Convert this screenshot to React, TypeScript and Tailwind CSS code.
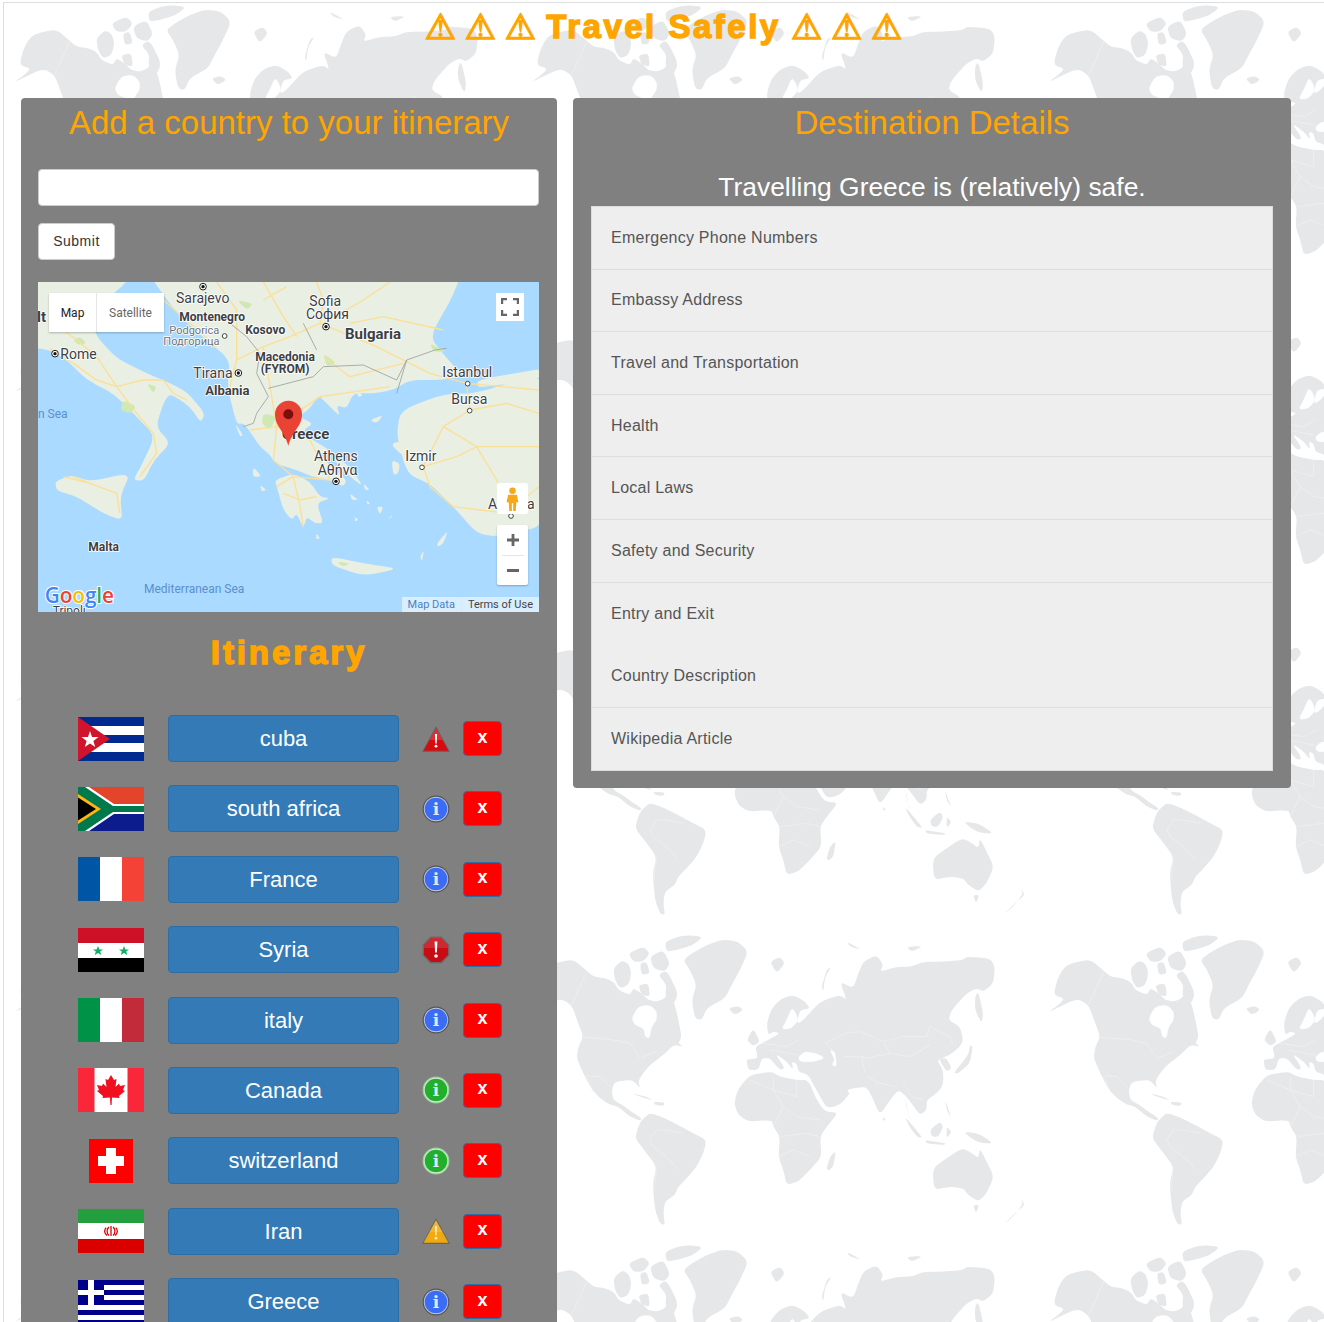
const sans = "font-['Liberation_Sans',Arial,sans-serif]";

const detailItems = [
  { label: "Emergency Phone Numbers", line: true },
  { label: "Embassy Address", line: true },
  { label: "Travel and Transportation", line: true },
  { label: "Health", line: true },
  { label: "Local Laws", line: true },
  { label: "Safety and Security", line: true },
  { label: "Entry and Exit", line: false },
  { label: "Country Description", line: true },
  { label: "Wikipedia Article", line: false },
];

const trips = [
  { name: "cuba", flag: "cuba", level: "danger" },
  { name: "south africa", flag: "southAfrica", level: "info" },
  { name: "France", flag: "france", level: "info" },
  { name: "Syria", flag: "syria", level: "stop" },
  { name: "italy", flag: "italy", level: "info" },
  { name: "Canada", flag: "canada", level: "safe" },
  { name: "switzerland", flag: "swiss", level: "safe" },
  { name: "Iran", flag: "iran", level: "warn" },
  { name: "Greece", flag: "greece", level: "info" },
];

// rounds the corners of an "M x,y L x,y ... Z" outline so coasts don't look cut with scissors
function roundCoast(d: string) {
  const lerp = (a: number[], b: number[], t: number) => [a[0] + (b[0] - a[0]) * t, a[1] + (b[1] - a[1]) * t];
  return d
    .split("M")
    .filter((sub) => sub.trim())
    .map((sub) => {
      const pts = sub.replace("Z", "").split("L").map((p) => p.trim().split(",").map(Number));
      return (
        pts
          .map((v, i) => {
            const from = lerp(v, pts[(i + pts.length - 1) % pts.length], 0.35);
            const to = lerp(v, pts[(i + 1) % pts.length], 0.35);
            return `${i === 0 ? "M" : "L"}${from} Q${v} ${to}`;
          })
          .join(" ") + " Z"
      );
    })
    .join(" ");
}

function Coast({ d, fill }: { d: string; fill?: string }) {
  return <path d={roundCoast(d)} fill={fill} stroke={fill} />;
}

const borderStroke = "#f1f2f3";

function Americas() {
  return (
    <>
      <Coast d="M-60,249 L-22,222 L-8,205 L-40,195 L-30,150 L-8,110 L20,98 L70,88 L110,122 L130,140 L170,145 L195,160 L205,180 L240,195 L250,175 L275,190 L295,210 L320,215 L345,205 L355,185 L375,225 L385,270 L395,320 L385,340 L400,350 L370,345 L345,370 L320,390 L295,410 L265,450 L270,475 L258,460 L245,450 L195,455 L185,480 L190,510 L225,530 L245,545 L275,565 L270,572 L240,560 L205,530 L175,522 L145,500 L120,470 L100,430 L80,385 L85,350 L100,320 L85,280 L65,225 L30,205 Z" />
      <Coast d="M245,265 L265,230 L300,225 L320,245 L320,270 L305,290 L298,325 L285,320 L282,295 L255,285 Z" fill="#fff" />
      <Coast d="M400,90 L425,70 L470,45 L520,28 L565,35 L595,65 L570,120 L545,165 L525,205 L470,235 L455,270 L435,265 L425,210 L440,165 L420,120 Z" />
      <Coast d="M535,235 L565,228 L580,240 L555,255 Z" />
      <Coast d="M190,115 L215,92 L235,100 L245,130 L235,165 L210,175 L195,150 Z M235,70 L280,50 L300,70 L280,95 L250,95 Z M300,80 L340,60 L360,100 L345,125 L310,115 Z M345,35 L400,15 L460,20 L430,45 L380,60 L350,65 Z M325,135 L350,120 L385,190 L370,225 L345,195 L350,165 Z M270,100 L290,95 L300,130 L275,135 Z M265,165 L295,160 L300,200 L275,195 Z" />
      <Coast d="M245,490 L290,500 L310,512 L270,500 Z M310,515 L345,518 L340,528 L315,525 Z" />
      <Coast d="M275,570 L300,548 L345,565 L385,585 L420,605 L470,630 L460,670 L440,710 L410,745 L385,770 L375,795 L345,815 L340,850 L345,885 L330,880 L315,840 L308,760 L320,710 L290,670 L255,625 L265,590 Z" />
      <path d="M100,322 L180,328 L240,340 L270,385 L320,365 M65,225 L110,125 M110,437 L150,440 L180,470 M300,630 L320,600 L350,600 L400,610 M300,630 L310,650 L360,690 L385,720 M320,710 L310,790 M108,438 L132,488" fill="none" stroke={borderStroke} strokeWidth="2" />
    </>
  );
}

function EurasiaAfrica() {
  return (
    <>
      <Coast d="M50,395 L52,388 L85,385 L75,350 L105,335 L150,310 L130,305 L115,315 L110,280 L125,235 L155,205 L190,195 L225,215 L240,235 L210,240 L200,280 L215,275 L270,215 L330,195 L350,210 L330,155 L370,175 L385,130 L400,95 L440,75 L460,105 L450,125 L500,110 L545,110 L580,95 L640,95 L700,90 L710,80 L780,85 L795,110 L790,160 L760,185 L740,175 L710,190 L665,240 L655,270 L690,290 L700,330 L690,350 L660,375 L620,390 L640,420 L640,465 L620,490 L590,510 L590,540 L570,555 L545,520 L525,495 L505,480 L480,510 L450,555 L430,510 L410,470 L370,475 L350,480 L360,490 L330,525 L290,535 L265,490 L245,455 L235,435 L205,425 L200,400 L185,395 L190,420 L170,395 L135,370 L165,415 L150,420 L120,385 L95,385 L85,420 L55,420 Z" />
      <Coast d="M205,380 L225,365 L260,370 L285,385 L250,395 L210,395 Z M300,360 L315,365 L320,410 L305,405 L315,390 Z M185,235 L170,270 L155,298 L185,295 L205,270 L195,245 Z" fill="#fff" />
      <Coast d="M12,520 L25,475 L60,435 L125,425 L150,440 L200,450 L235,450 L260,510 L285,545 L325,548 L290,590 L270,620 L275,680 L240,720 L205,755 L170,765 L160,720 L145,680 L150,620 L130,590 L125,570 L55,575 L25,555 Z" />
      <Coast d="M290,715 L300,680 L318,662 L310,710 L295,722 Z M50,330 L70,295 L90,335 L70,348 Z M120,95 L150,80 L165,100 L140,130 Z M275,170 L290,120 L305,110 L285,140 L280,185 Z M350,35 L395,60 L360,50 Z M530,50 L580,48 L545,65 Z M5,240 L30,232 L32,245 L10,252 Z" />
      <Coast d="M670,430 L715,375 L720,345 L728,350 L720,400 L685,430 Z M735,200 L745,185 L760,250 L755,280 L735,240 Z M625,385 L650,385 L665,415 L650,425 Z M525,500 L530,540 L545,575 L535,555 Z" />
      <Coast d="M525,560 L580,625 L560,620 L535,585 Z M585,630 L650,640 L640,645 L590,640 Z M600,600 L630,575 L640,590 L625,620 L605,620 Z M650,590 L665,605 L650,625 Z M700,605 L745,610 L790,640 L760,640 L730,630 Z M645,510 L665,565 L650,540 Z M460,560 L468,570 L460,572 Z" />
      <Coast d="M608,715 L650,685 L695,655 L720,665 L745,685 L750,655 L770,695 L792,740 L770,790 L745,815 L715,795 L700,775 L660,770 L612,780 Z M730,825 L748,825 L738,850 Z M820,885 L860,845 L885,825 L870,800 L880,820 L850,860 Z" />
      <path d="M285,340 L345,310 L390,305 L460,335 L520,320 L590,320 L600,290 L660,320 L670,345 M460,335 L480,370 L540,380 L600,345 M290,340 L310,365 M395,380 L410,385 L480,370 M340,380 L395,380 L405,430 M410,440 L450,460 L500,470 M520,455 L545,500 L580,510 M60,450 L130,480 L200,500 L200,450 M130,440 L130,480 L160,530 L200,560 M160,530 L130,590 M200,560 L270,570 M150,620 L230,610 L270,620 M145,680 L190,660 L240,680 M100,340 L170,350 L205,330 M120,360 L205,375" fill="none" stroke={borderStroke} strokeWidth="2" />
    </>
  );
}

function WorldBackground() {
  return (
    <svg className="absolute inset-0" width="1324" height="1322">
      <defs>
        <pattern id="worldTile" patternUnits="userSpaceOnUse" x="43" y="4" width="517" height="310">
          <g fill="#e6e7e9" transform="translate(-560 -934)">
            <g transform="translate(550 930) scale(0.3333)"><Americas /></g>
            <g transform="translate(1067 930) scale(0.3333)"><Americas /></g>
            <g transform="translate(730 930) scale(0.3333)"><EurasiaAfrica /></g>
          </g>
        </pattern>
      </defs>
      <rect width="1324" height="1322" fill="url(#worldTile)" />
    </svg>
  );
}

function MapLabel({ x, y, size, text, bold, color = "#3c4043" }: { x: number; y: number; size: number; text: string; bold?: boolean; color?: string }) {
  return (
    <text x={x} y={y} fontSize={size} fontWeight={bold ? 700 : 400} fill={color} stroke="#fff" strokeWidth="5" paintOrder="stroke" strokeLinejoin="round" fontFamily="Roboto, sans-serif">
      {text}
    </text>
  );
}

function Dot({ x, y, open }: { x: number; y: number; open?: boolean }) {
  return open ? (
    <circle cx={x} cy={y} r="7" fill="#fff" stroke="#444" strokeWidth="3" />
  ) : (
    <g>
      <circle cx={x} cy={y} r="10" fill="#fff" stroke="#222" strokeWidth="3" />
      <circle cx={x} cy={y} r="5" fill="#111" />
    </g>
  );
}

function GreeceMap() {
  const land = "#e9efe2";
  const road = "#fcdf96";
  return (
    <svg viewBox="24 6 1503 990" width="501" height="330" className="block">
      <rect x="24" y="6" width="1503" height="990" fill="#aadaff" />
      <g fill={land}>
        <Coast d="M24,-40 L320,-40 L290,6 L240,50 L180,110 L200,170 L260,235 L350,280 L400,300 L470,335 L525,400 L512,428 L480,380 L420,340 L400,370 L378,440 L422,490 L372,540 L342,602 L310,600 L332,560 L375,470 L330,420 L250,340 L170,300 L110,240 L60,210 L-20,200 L-20,-40 Z" />
        <Coast d="M75,605 L125,585 L180,605 L302,578 L270,650 L278,722 L220,700 L140,650 L80,632 Z" />
        <Coast d="M340,-40 L1300,-40 L1285,6 L1262,60 L1200,170 L1240,222 L1300,290 L1230,300 L1140,300 L1090,330 L1030,340 L970,340 L950,385 L920,375 L930,410 L890,370 L865,345 L840,385 L805,410 L850,430 L820,450 L840,475 L900,510 L870,525 L910,565 L950,600 L940,620 L900,600 L845,590 L800,570 L735,550 L720,525 L690,500 L660,455 L640,430 L620,432 L592,322 L600,240 L530,180 L440,100 Z" />
        <Coast d="M735,600 L790,580 L840,605 L870,650 L900,655 L860,670 L880,730 L855,730 L830,710 L820,745 L800,700 L785,720 L760,690 L740,620 Z" />
        <Coast d="M910,525 L960,560 L1000,620 L960,590 L920,550 Z" />
        <Coast d="M1110,392 L1240,342 L1340,340 L1560,268 L1560,735 L1400,770 L1340,760 L1270,680 L1200,612 L1132,582 L1100,470 Z" />
        <Coast d="M1340,300 L1560,262 L1560,290 L1345,325 Z" />
        <Coast d="M905,830 L1000,850 L1108,866 L1000,888 L905,856 Z" />
        <Coast d="M1220,792 L1255,750 L1240,790 L1225,800 Z M980,335 L1000,345 L985,352 Z M1020,420 L1060,405 L1040,430 Z M1080,490 L1135,480 L1150,510 L1120,530 Z M1085,540 L1110,550 L1105,580 L1090,585 Z M615,430 L640,465 L630,470 Z M670,560 L695,590 L668,590 Z M690,615 L710,630 L695,635 Z M1040,680 L1060,680 L1050,705 Z M960,640 L985,660 L965,660 Z M1000,610 L1020,630 L1005,630 Z M860,760 L870,775 L858,778 Z M1170,830 L1182,810 L1176,845 Z M1010,660 L1020,670 L1012,675 Z M975,710 L985,720 L975,725 Z M1080,710 L1090,705 L1075,720 Z" />
      </g>
      <g fill="#cfe8b4">
        <Coast d="M280,360 L320,380 L300,400 L270,390 Z M170,190 L150,170 L130,180 L145,195 Z M350,310 L380,320 L370,340 Z M700,400 L740,410 L720,450 L695,430 Z M880,220 L920,250 L890,260 Z M620,60 L670,70 L650,90 Z M1200,190 L1250,215 L1210,215 Z M920,845 L960,850 L940,860 Z" />
      </g>
      <g fill="none" stroke={road} strokeWidth="4" strokeLinejoin="round">
        <path d="M60,205 L130,250 L200,300 L260,320 L340,300 L400,300 L430,340 L470,360 M260,320 L320,400 L370,460 L380,520 L330,590 M60,120 L140,180 L200,230 L260,320" />
        <path d="M100,590 L180,610 L260,640 L270,700 M180,610 L130,590" />
        <path d="M620,240 L700,200 L780,170 L870,130 L880,60 L860,6 M870,130 L1040,200 L1200,280 L1310,310 L1527,330 M700,60 L770,20" />
        <path d="M700,200 L720,320 L740,440 L730,540 L790,590 L900,600 M740,440 L870,350 L1080,320 M790,590 L810,680 L820,740 M790,590 L740,620 M660,450 L740,440 L840,480 L900,600 M760,640 L810,660 L860,650" />
        <path d="M560,6 L620,90 L620,240 L600,320 M700,6 L760,110 L800,170 M1080,6 L1000,60 L880,130 M400,60 L480,130 L560,200 M960,130 L1060,110 L1240,150 M880,230 L960,290 L1120,250" />
        <path d="M1310,320 L1320,390 L1240,440 L1180,560 L1200,620 L1270,680 L1350,690 L1440,700 M1320,390 L1430,370 L1527,400 M1240,440 L1340,500 L1527,500 M1430,700 L1527,620 M1340,500 L1400,600 L1440,700 M1180,560 L1280,530 L1340,500" />
      </g>
      <g fill="none" stroke="#9aa0a0" strokeWidth="2.5" strokeLinejoin="round">
        <path d="M640,440 L670,430 L680,400 L715,350 L700,320 L680,280 L690,220 L650,170 L600,130 M715,325 L850,290 L880,260 L1000,255 L1100,300 L1130,240 L1215,210 L1250,205 M820,130 L860,210 M1100,340 L1130,240" />
      </g>
      <MapLabel x={20} y={125} size={45} text="It" bold />
      <MapLabel x={438} y={70} size={42} text="Sarajevo" />
      <MapLabel x={448} y={122} size={36} text="Montenegro" bold />
      <MapLabel x={646} y={162} size={36} text="Kosovo" bold />
      <MapLabel x={418} y={162} size={33} text="Podgorica" color="#6b7278" />
      <MapLabel x={400} y={195} size={33} text="Подгорица" color="#6b7278" />
      <MapLabel x={838} y={78} size={42} text="Sofia" />
      <MapLabel x={828} y={118} size={42} text="София" />
      <MapLabel x={945} y={176} size={45} text="Bulgaria" bold />
      <MapLabel x={91} y={236} size={42} text="Rome" />
      <MapLabel x={676} y={243} size={36} text="Macedonia" bold />
      <MapLabel x={692} y={278} size={36} text="(FYROM)" bold />
      <MapLabel x={490} y={294} size={42} text="Tirana" />
      <MapLabel x={526} y={344} size={39} text="Albania" bold />
      <MapLabel x={1237} y={291} size={42} text="Istanbul" />
      <MapLabel x={1264} y={371} size={42} text="Bursa" />
      <MapLabel x={755} y={476} size={45} text="Greece" bold />
      <MapLabel x={852} y={543} size={42} text="Athens" />
      <MapLabel x={863} y={585} size={42} text="Αθήνα" />
      <MapLabel x={1126} y={542} size={42} text="Izmir" />
      <MapLabel x={1374} y={687} size={42} text="Antalya" />
      <MapLabel x={175} y={814} size={36} text="Malta" bold />
      <text x={24} y={414} fontSize="36" fill="#5b8fd0" fontFamily="Roboto, sans-serif">n Sea</text>
      <text x={342} y={938} fontSize="36" fill="#5b8fd0" fontFamily="Roboto, sans-serif">Mediterranean Sea</text>
      <MapLabel x={68} y={1006} size={36} text="Tripoli" />
      <Dot x={519} y={20} />
      <Dot x={75} y={221} />
      <Dot x={625} y={279} />
      <Dot x={888} y={140} />
      <Dot x={918} y={604} />
      <Dot x={584} y={168} open />
      <Dot x={1313} y={311} open />
      <Dot x={1319} y={392} open />
      <Dot x={1176} y={562} open />
      <Dot x={1443} y={708} open />
      <path d="M775,498 C765,455 735,440 735,403 A40,40 0 0 1 816,403 C816,440 785,455 775,498 Z" fill="#ea4335" />
      <circle cx="775" cy="403" r="15" fill="#7a0f0c" />
      <text x="44" y="970" fontSize="62" fontWeight="600" fontFamily="'Open Sans', sans-serif" stroke="#fff" strokeWidth="6" paintOrder="stroke">
        <tspan fill="#4285f4">G</tspan>
        <tspan fill="#ea4335">o</tspan>
        <tspan fill="#fbbc05">o</tspan>
        <tspan fill="#4285f4">g</tspan>
        <tspan fill="#34a853">l</tspan>
        <tspan fill="#ea4335">e</tspan>
      </text>
    </svg>
  );
}

function MapPanel() {
  return (
    <div className="relative mt-[22px] h-[330px] w-[501px] overflow-hidden font-['Roboto',sans-serif]">
      <GreeceMap />
      <div className="absolute left-[11px] top-[11px] flex h-[39px] bg-white text-[12px] shadow-[0_1px_2px_rgba(0,0,0,0.25)]">
        <div className="flex w-[48px] items-center justify-center border-r border-[#e6e6e6] text-[#222]">Map</div>
        <div className="flex w-[67px] items-center justify-center text-[#666]">Satellite</div>
      </div>
      <div className="absolute right-[15px] top-[11px] flex h-[28px] w-[28px] items-center justify-center bg-white">
        <svg width="18" height="18" viewBox="0 0 18 18" fill="none" stroke="#666" strokeWidth="2.4">
          <path d="M1,6 V1 H6 M12,1 H17 V6 M17,12 V17 H12 M6,17 H1 V12" />
        </svg>
      </div>
      <div className="absolute right-[11px] top-[201px] flex h-[31px] w-[31px] items-center justify-center rounded-[2px] bg-white">
        <svg width="13" height="24" viewBox="0 0 12 22" fill="#f5a818">
          <circle cx="6" cy="3.4" r="3" />
          <path d="M2,7 H10 L11.5,14 H9.5 L9,22 H6.6 V15 H5.4 V22 H3 L2.5,14 H.5 Z" />
        </svg>
      </div>
      <div className="absolute right-[11px] top-[243px] flex h-[60px] w-[31px] flex-col items-center rounded-[2px] bg-white shadow-[0_1px_2px_rgba(0,0,0,0.25)]">
        <div className="flex h-[30px] w-full items-center justify-center">
          <svg width="12" height="12" viewBox="0 0 12 12" fill="#666"><path d="M4.6,0 H7.4 V4.6 H12 V7.4 H7.4 V12 H4.6 V7.4 H0 V4.6 H4.6 Z" /></svg>
        </div>
        <div className="h-px w-[22px] bg-[#e6e6e6]" />
        <div className="flex h-[29px] w-full items-center justify-center">
          <svg width="12" height="4" viewBox="0 0 12 4" fill="#666"><rect width="12" height="3" /></svg>
        </div>
      </div>
      <div className="absolute bottom-0 right-0 flex h-[15px] items-center bg-[rgba(255,255,255,0.55)] text-[11px] leading-none">
        <span className="border-r border-[#e6e6e6] px-[6px] leading-[15px] text-[#4a7fc1]">Map Data</span>
        <span className="px-[6px] text-[#444]">Terms of Use</span>
      </div>
    </div>
  );
}

function Flag({ kind }: { kind: string }) {
  if (kind === "swiss") {
    return (
      <svg width="44" height="44" viewBox="0 0 44 44">
        <rect width="44" height="44" fill="#ff0000" />
        <path d="M17,9 H27 V17 H35 V27 H27 V35 H17 V27 H9 V17 H17 Z" fill="#fff" />
      </svg>
    );
  }
  return (
    <svg width="66" height="44" viewBox="0 0 66 44">
      {kind === "cuba" && (
        <>
          <rect width="66" height="44" fill="#002a8f" />
          <path d="M0,9 H66 V18 H0 Z M0,26 H66 V35 H0 Z" fill="#fff" />
          <path d="M0,0 L32,22 L0,44 Z" fill="#cf142b" />
          <path d="M12,14 L14,20 H20.5 L15.4,24 L17.2,30 L12,26.4 L6.8,30 L8.6,24 L3.5,20 H10 Z" fill="#fff" />
        </>
      )}
      {kind === "southAfrica" && (
        <>
          <rect width="66" height="22" fill="#e4442a" />
          <rect y="22" width="66" height="22" fill="#0c1c8c" />
          <path d="M0,0 L11,0 L36,17 H66 V27 H36 L11,44 H0 Z" fill="#fff" />
          <path d="M0,0 L7,0 L35,19 H66 V25 H35 L7,44 H0 Z" fill="#007a4d" />
          <path d="M0,7 L23,22 L0,37 Z" fill="#ffb612" />
          <path d="M0,10.5 L18,22 L0,33.5 Z" fill="#000" />
        </>
      )}
      {kind === "france" && (
        <>
          <rect width="22" height="44" fill="#0055a4" />
          <rect x="22" width="22" height="44" fill="#fff" />
          <rect x="44" width="22" height="44" fill="#f44336" />
        </>
      )}
      {kind === "syria" && (
        <>
          <rect width="66" height="15" fill="#ce1126" />
          <rect y="15" width="66" height="15" fill="#fff" />
          <rect y="30" width="66" height="14" fill="#000" />
          <path d="M20,18 L21.4,21.4 H25 L22.2,23.6 L23.2,27 L20,25 L16.8,27 L17.8,23.6 L15,21.4 H18.6 Z M46,18 L47.4,21.4 H51 L48.2,23.6 L49.2,27 L46,25 L42.8,27 L43.8,23.6 L41,21.4 H44.6 Z" fill="#12ad6b" />
        </>
      )}
      {kind === "italy" && (
        <>
          <rect width="22" height="44" fill="#009246" />
          <rect x="22" width="22" height="44" fill="#fff" />
          <rect x="44" width="22" height="44" fill="#c22c3a" />
        </>
      )}
      {kind === "canada" && (
        <>
          <rect width="66" height="44" fill="#fa273a" />
          <rect x="16.5" width="33" height="44" fill="#fff" />
          <path d="M33,7 L36,12 L38.5,11 L37.5,19 L41,15.5 L42,18 L47,17 L45,22 L47,23 L41,28 L41.5,30 L34,29.5 L33.6,37 H32.4 L32,29.5 L24.5,30 L25,28 L19,23 L21,22 L19,17 L24,18 L25,15.5 L28.5,19 L27.5,11 L30,12 Z" fill="#f01020" />
        </>
      )}
      {kind === "iran" && (
        <>
          <rect width="66" height="14" fill="#239f40" />
          <rect y="14" width="66" height="16" fill="#fff" />
          <rect y="30" width="66" height="14" fill="#da0000" />
          <path d="M33,17 V27 M30.8,18 C28.5,21 28.5,24 31,26.5 M35.2,18 C37.5,21 37.5,24 35,26.5 M28.2,18.8 C26,21 26,24 29,26.5 M37.8,18.8 C40,21 40,24 37,26.5" fill="none" stroke="#da0000" strokeWidth="1.3" />
        </>
      )}
      {kind === "greece" && (
        <>
          <rect width="66" height="44" fill="#00008b" />
          <path d="M26,5 H66 V10 H26 Z M26,15 H66 V20 H26 Z M0,25 H66 V30 H0 Z M0,35 H66 V40 H0 Z" fill="#fff" />
          <path d="M10,0 H16 V10 H26 V15 H16 V25 H10 V15 H0 V10 H10 Z" fill="#fff" />
        </>
      )}
    </svg>
  );
}

function Level({ level }: { level: string }) {
  const infoColor = level === "safe" ? "#22b02c" : "#3b6cf5";
  return (
    <svg width="28" height="28" viewBox="0 0 28 28">
      {(level === "info" || level === "safe") && (
        <>
          <circle cx="14" cy="14" r="13.4" fill={level === "safe" ? "#9ccf9e" : "#555"} />
          <circle cx="14" cy="14" r="12.2" fill={level === "safe" ? "#d7ecd8" : "#c3cbe0"} />
          <circle cx="14" cy="14" r="11.3" fill={infoColor} />
          <text x="14" y="20" textAnchor="middle" fontSize="17" fontWeight="700" fill="#dfe8ff" fontFamily="'DejaVu Serif', serif">i</text>
        </>
      )}
      {level === "stop" && (
        <>
          <path d="M8.4,.6 H19.6 L27.4,8.4 V19.6 L19.6,27.4 H8.4 L.6,19.6 V8.4 Z" fill="#6a6a6a" />
          <path d="M9,2 H19 L26,9 V19 L19,26 H9 L2,19 V9 Z" fill="#c80c14" />
          <path d="M9,2 H19 L26,9 V12 H2 V9 Z" fill="#fff" fillOpacity="0.12" />
          <path d="M12.6,5.6 H15.4 L14.9,16.4 H13.1 Z" fill="#fff" />
          <circle cx="14" cy="20" r="1.8" fill="#fff" />
        </>
      )}
      {(level === "danger" || level === "warn") && (
        <>
          <path d="M14,1 L28,27 H0 Z" fill="#666" />
          <path d="M14,3.2 L26.4,25.8 H1.6 Z" fill={level === "warn" ? "#f0a90f" : "#d80a10"} />
          <path d="M14,3.2 L20.5,15 H7.5 Z" fill="#fff" fillOpacity="0.15" />
          <path d="M12.9,9 H15.1 L14.7,18.6 H13.3 Z" fill={level === "warn" ? "#ffe9a8" : "#fff"} />
          <circle cx="14" cy="21.2" r="1.4" fill={level === "warn" ? "#ffe9a8" : "#fff"} />
        </>
      )}
    </svg>
  );
}

function TripRow({ name, flag, level }: { name: string; flag: string; level: string }) {
  return (
    <div className="flex h-[47px] shrink-0 items-center">
      <div className="ml-[40px] flex w-[66px] justify-center">
        <Flag kind={flag} />
      </div>
      <button className="ml-[24px] h-[47px] w-[231px] rounded-[4px] border border-[#2e6da4] bg-[#337ab7] text-[22px] text-white">
        {name}
      </button>
      <div className="ml-[23px] flex h-[28px] w-[28px] items-center justify-center">
        <Level level={level} />
      </div>
      <button className="ml-[13px] h-[35px] w-[39px] rounded-[4px] border border-[#2e6da4] bg-[#ff0000] pb-[3px] text-[18px] font-bold text-white">
        x
      </button>
    </div>
  );
}

function WarnMark() {
  return <span className="flex w-[28px] justify-center text-[35px] font-['DejaVu_Sans',sans-serif] tracking-normal">⚠</span>;
}

export default function App() {
  return (
    <div className={`relative h-[1322px] overflow-hidden bg-white ${sans}`}>
      <WorldBackground />
      <div className="absolute left-[3px] top-[2px] h-px w-full bg-[#dddddd]" />
      <div className="absolute left-[3px] top-[2px] h-full w-px bg-[#dddddd]" />
      <div className="relative">
        <h1 className="ml-[3px] flex h-[98px] items-start justify-center gap-[12px] pt-[7px] text-[33px] font-bold leading-[40px] tracking-[2.5px] text-[#ffa500] [-webkit-text-stroke:1.4px_#ffa500]">
          <WarnMark />
          <WarnMark />
          <WarnMark />
          <span>Travel Safely</span>
          <WarnMark />
          <WarnMark />
          <WarnMark />
        </h1>
        <div className="ml-[21px] flex items-start gap-[16px]">
          <section className="h-[1300px] w-[536px] shrink-0 rounded-[4px] bg-[#808080] px-[17px] pt-[5px]">
            <h2 className="text-center text-[33px] leading-[40px] text-[#ffa500]">Add a country to your itinerary</h2>
            <input className="mt-[26px] block h-[37px] w-[501px] rounded-[4px] border border-[#cccccc] bg-white" />
            <button className="mt-[17px] block h-[37px] w-[77px] rounded-[4px] border border-[#cccccc] bg-white text-[14px] tracking-[0.5px] text-[#333]">
              Submit
            </button>
            <MapPanel />
            <h2 className="mt-[21px] text-center text-[33px] font-bold leading-[40px] tracking-[2.9px] text-[#ffa500] [-webkit-text-stroke:1.4px_#ffa500]">Itinerary</h2>
            <div className="mt-[42px] flex flex-col gap-[23.4px]">
              {trips.map((trip) => (
                <TripRow key={trip.name} {...trip} />
              ))}
            </div>
          </section>
          <section className="h-[690px] w-[718px] shrink-0 rounded-[4px] bg-[#808080] px-[18px] pt-[5px]">
            <h2 className="text-center text-[33px] leading-[40px] text-[#ffa500]">Destination Details</h2>
            <h3 className="mt-[29px] text-center text-[26.4px] leading-[30px] text-white">Travelling Greece is (relatively) safe.</h3>
            <ul className="mt-[4px] border border-[#dddddd] bg-[#eeeeee] text-[16px] tracking-[0.25px] text-[#555]">
              {detailItems.map((item) => (
                <li key={item.label} className={`flex h-[62.6px] items-center px-[19px] ${item.line ? "border-b border-[#dddddd]" : ""}`}>
                  {item.label}
                </li>
              ))}
            </ul>
          </section>
        </div>
      </div>
    </div>
  );
}
